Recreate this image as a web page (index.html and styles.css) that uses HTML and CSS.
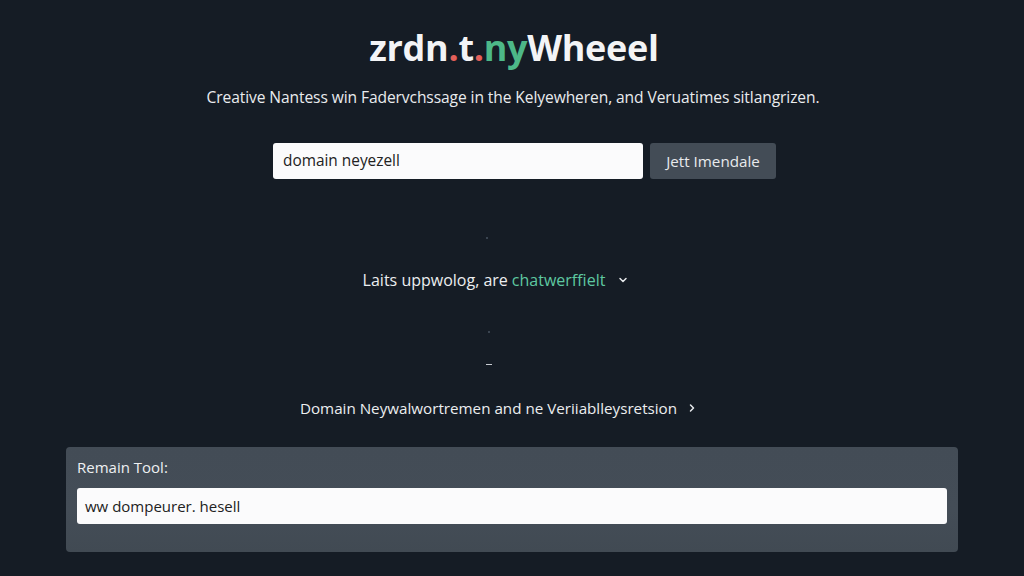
FILE: index.html
```html
<!DOCTYPE html>
<html>
<head>
<meta charset="utf-8">
<link rel="stylesheet" href="styles.css">
</head>
<body>
<main class="page">
  <h1 class="title">zrdn<span class="red">.</span>t<span class="red">.</span><span class="green">ny</span>Wheeel</h1>
  <p class="subtitle">Creative Nantess win Fadervchssage in the Kelyewheren, and Veruatimes sitlangrizen.</p>
  <form class="search">
    <div class="field">domain neyezell</div>
    <button type="button" class="btn">Jett Imendale</button>
  </form>
  <span class="speck s1"></span>
  <div class="link link1">Laits uppwolog, are <span class="accent">chatwerffielt</span>
    <svg class="chev" width="10" height="10" viewBox="0 0 10 10"><path d="M2 3.5 L5 6.5 L8 3.5" fill="none" stroke="#e6e9ec" stroke-width="1.5" stroke-linecap="round" stroke-linejoin="round"/></svg>
  </div>
  <span class="speck s2"></span>
  <span class="dash"></span>
  <div class="link link2">Domain Neywalwortremen and ne Veriiablleysretsion
    <svg class="chev" width="10" height="10" viewBox="0 0 10 10"><path d="M3.5 2 L6.5 5 L3.5 8" fill="none" stroke="#e6e9ec" stroke-width="1.5" stroke-linecap="round" stroke-linejoin="round"/></svg>
  </div>
  <section class="panel">
    <div class="panel-label">Remain Tool:</div>
    <div class="panel-field">ww dompeurer. hesell</div>
  </section>
</main>
</body>
</html>
```
FILE: styles.css
```css
* { box-sizing: border-box; }
html, body {
  margin: 0;
  padding: 0;
  background: #151c25;
  height: 100%;
}
body {
  font-family: "Open Sans", "Noto Sans", sans-serif;
  color: #eef0f2;
  overflow: hidden;
}
.page {
  display: flex;
  flex-direction: column;
  align-items: center;
  width: 1024px;
  height: 576px;
  padding-top: 26px;
}
.title {
  margin: 0;
  font-size: 36px;
  font-weight: 700;
  line-height: 44px;
  letter-spacing: -0.3px;
  color: #f3f4f6;
  height: 44px;
  padding-left: 4px;
}
.red { color: #e4605a; }
.green { color: #4db888; }
.subtitle {
  margin: 17px 0 0;
  font-size: 15.6px;
  line-height: 20px;
  color: #e9ebee;
  letter-spacing: -0.1px;
  padding-left: 2px;
}
.search {
  margin: 36px 0 0;
  display: flex;
  gap: 7px;
  padding-left: 25px;
}
.field {
  width: 370px;
  height: 36px;
  background: #fbfbfc;
  border-radius: 3px;
  color: #222;
  font-size: 15.4px;
  line-height: 36px;
  padding-left: 10px;
}
.btn {
  width: 126px;
  height: 36px;
  background: #434c56;
  border: 0;
  border-radius: 3px;
  color: #e8eaed;
  font-family: inherit;
  font-size: 15.2px;
  padding: 0;
}
.speck {
  display: block;
  width: 2px;
  height: 2px;
  background: #3a4450;
}
.s1 { margin: 58px 0 0; margin-left: -50px; }
.link {
  display: flex;
  align-items: center;
  line-height: 20px;
  color: #eceef0;
}
.link1 { margin-top: 31px; margin-right: 33px; font-size: 16px; }
.accent { color: #5ec8a1; margin-left: 4px; }
.chev { margin-left: 13px; }
.s2 { margin: 41px 0 0; margin-left: -46px; }
.dash {
  display: block;
  width: 6px;
  height: 1px;
  background: #c8ccd2;
  margin: 31px 0 0 -46px;
}
.link2 { margin-top: 33px; margin-right: 27px; font-size: 15.2px; }
.link2 .chev { margin-left: 10px; }
.panel {
  margin-top: 29px;
  width: 892px;
  height: 105px;
  background: linear-gradient(180deg, #434c56 0%, #444d57 60%, #414a53 100%);
  border-radius: 4px;
  padding: 10px 11px 0;
}
.panel-label {
  font-size: 15px;
  line-height: 20px;
  color: #eef0f2;
}
.panel-field {
  margin-top: 11px;
  height: 36px;
  background: #fbfbfc;
  border-radius: 3px;
  color: #222;
  font-size: 15px;
  line-height: 36px;
  padding-left: 8px;
}
```
